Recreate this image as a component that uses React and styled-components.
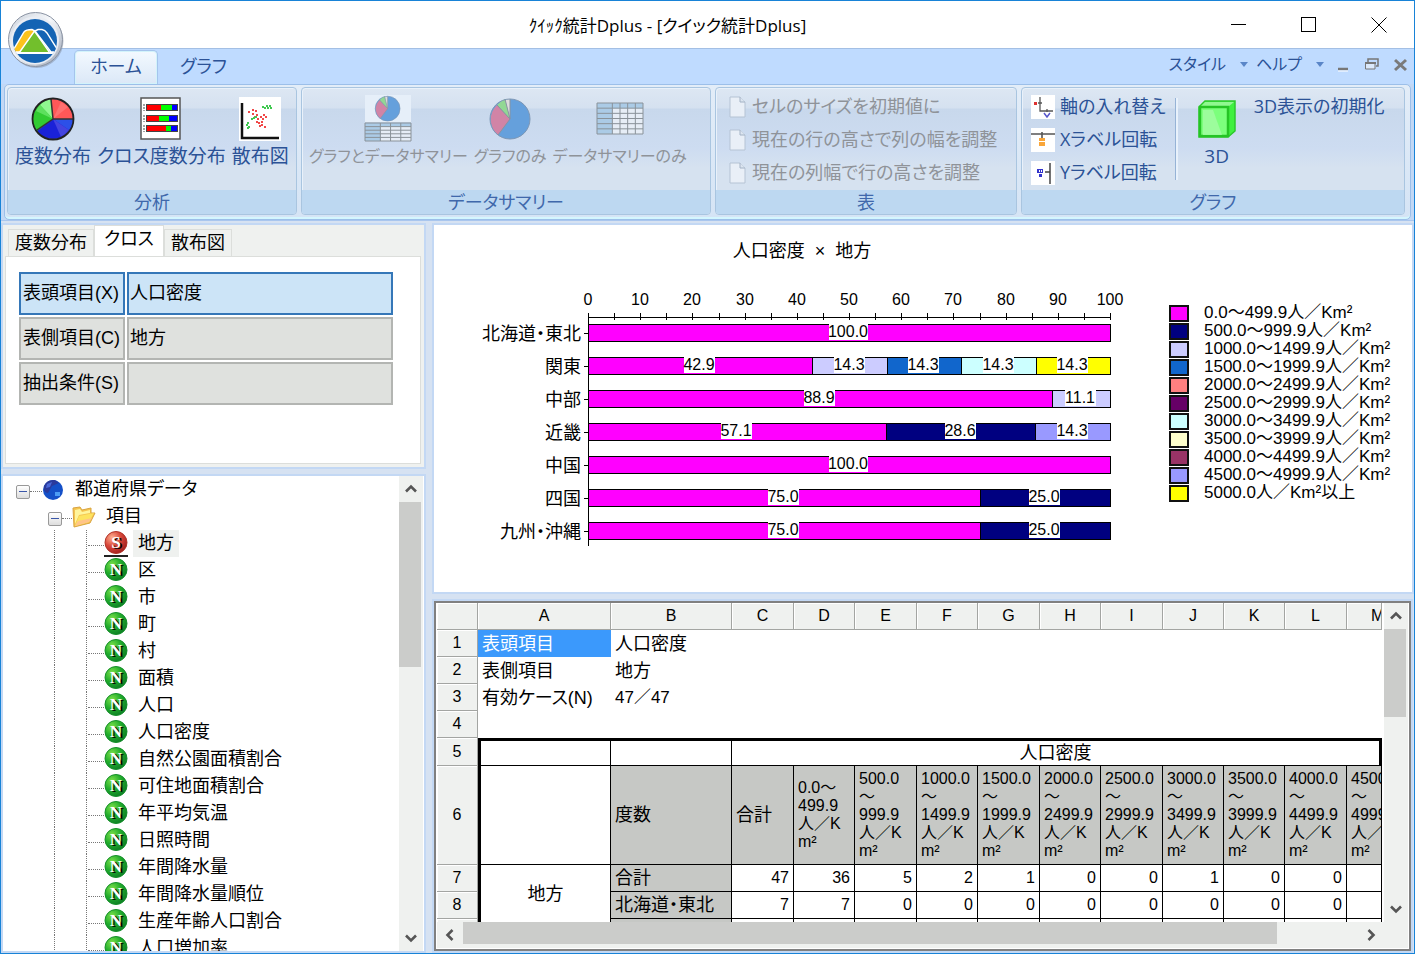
import { Fragment } from 'react'
import styled, { createGlobalStyle } from 'styled-components'

const GlobalStyle = createGlobalStyle`
  * {
    box-sizing: border-box;
  }

  body {
    margin: 0;
    font-family: 'Liberation Sans', 'Noto Sans CJK JP', sans-serif;
    font-size: 18px;
    line-height: 27px;
    color: #000;
    font-feature-settings: 'palt';
  }

  button, input {
    font: inherit;
    font-feature-settings: inherit;
    color: inherit;
    margin: 0;
  }
`

const MAGENTA = '#ff00ff'
const NAVY = '#000080'
const LAVENDER = '#ccccff'
const BLUE = '#1166cc'
const CYAN = '#ccffff'
const PERIWINKLE = '#9999ff'
const YELLOW = '#ffff00'

const legend = [
  [MAGENTA, '0.0～499.9人／Km²'],
  [NAVY, '500.0～999.9人／Km²'],
  [LAVENDER, '1000.0～1499.9人／Km²'],
  [BLUE, '1500.0～1999.9人／Km²'],
  ['#ff8080', '2000.0～2499.9人／Km²'],
  ['#660066', '2500.0～2999.9人／Km²'],
  [CYAN, '3000.0～3499.9人／Km²'],
  ['#ffffcc', '3500.0～3999.9人／Km²'],
  ['#993366', '4000.0～4499.9人／Km²'],
  [PERIWINKLE, '4500.0～4999.9人／Km²'],
  [YELLOW, '5000.0人／Km²以上']
]

const bars = [
  { name: '北海道・東北', parts: [[100, MAGENTA]] },
  { name: '関東', parts: [[42.9, MAGENTA], [14.3, LAVENDER], [14.3, BLUE], [14.3, CYAN], [14.3, YELLOW]] },
  { name: '中部', parts: [[88.9, MAGENTA], [11.1, LAVENDER]] },
  { name: '近畿', parts: [[57.1, MAGENTA], [28.6, NAVY], [14.3, PERIWINKLE]] },
  { name: '中国', parts: [[100, MAGENTA]] },
  { name: '四国', parts: [[75, MAGENTA], [25, NAVY]] },
  { name: '九州・沖縄', parts: [[75, MAGENTA], [25, NAVY]] }
]

const treeItems = [
  '地方', '区', '市', '町', '村', '面積', '人口', '人口密度', '自然公園面積割合', '可住地面積割合',
  '年平均気温', '日照時間', '年間降水量', '年間降水量順位', '生産年齢人口割合', '人口増加率'
]

const columns = [
  ['A', 133], ['B', 121], ['C', 62], ['D', 61], ['E', 62], ['F', 61], ['G', 62],
  ['H', 61], ['I', 62], ['J', 61], ['K', 61], ['L', 62], ['M', 35]
]

const ranges = [
  ['0.0～', '499.9'],
  ['500.0', '～', '999.9'],
  ['1000.0', '～', '1499.9'],
  ['1500.0', '～', '1999.9'],
  ['2000.0', '～', '2499.9'],
  ['2500.0', '～', '2999.9'],
  ['3000.0', '～', '3499.9'],
  ['3500.0', '～', '3999.9'],
  ['4000.0', '～', '4499.9'],
  ['4500.0', '～', '4999.9']
]

/* ---------- icons ---------- */

function OrbIcon () {
  return (
    <svg width='58' height='58' viewBox='0 0 58 58' aria-hidden='true'>
      <defs>
        <linearGradient id='orbRing' x1='0' y1='0' x2='1' y2='1'>
          <stop offset='0' stopColor='#c9d0da' />
          <stop offset='.45' stopColor='#f6f8fb' />
          <stop offset='1' stopColor='#98a2b3' />
        </linearGradient>
        <clipPath id='orbClip'><circle cx='28' cy='30' r='22' /></clipPath>
      </defs>
      <circle cx='29.5' cy='30' r='27' fill='#7f8ba0' opacity='.5' />
      <circle cx='28.5' cy='28.5' r='27' fill='url(#orbRing)' stroke='#8a93a3' />
      <circle cx='28' cy='29.5' r='24' fill='#e9edf4' />
      <circle cx='28' cy='30' r='22' fill='#1464b4' />
      <g clipPath='url(#orbClip)' stroke='#fff' strokeWidth='1.4'>
        <path d='M28 20 31 18.500H35Q38 19 40 22L52 41H44Z' fill='#1464b4' />
        <path d='M5 41 17 21Q19 18.500 25 18.500L28 20 14 41Z' fill='#fbc31c' />
        <path d='M12 42 27.500 20 43 42Z' fill='#72bf2c' />
        <path d='M4 42H53' strokeWidth='2.2' />
      </g>
    </svg>
  )
}

function PieIcon () {
  return (
    <svg width='44' height='44' viewBox='0 0 44 44' aria-hidden='true'>
      <circle cx='22' cy='22' r='20' fill='#1a22d8' />
      <path d='M22 22 20 2A20 20 0 0 1 42 22Z' fill='#ff5858' />
      <path d='M22 22 20 2A20 20 0 0 0 6 34Z' fill='#32cb32' />
      <path d='M22 22 20 2Q13 3 9 8Z' fill='#90f890' />
      <path d='M22 22 9 8Q7 10 5 14Z' fill='#5ee05e' />
      <path d='M22 22 42 22Q42 28 38 33Z' fill='#2c50e8' />
      <path d='M22 22 38 33Q34 38 30 40Z' fill='#4444e0' />
      <path d='M22 22 30 5 37 10Z' fill='#ff7070' />
      <path d='M22 22 20 2M22 22H42M22 22 6 33' stroke='#333' strokeWidth='1.5' />
      <circle cx='22' cy='22' r='20.5' fill='none' stroke='#222' strokeWidth='1.8' />
    </svg>
  )
}

function CrossIcon () {
  const rows = [[8, 14, 25], [19, 12, 22], [29, 19, 24]]
  return (
    <svg width='44' height='44' viewBox='0 0 44 44' aria-hidden='true'>
      <rect x='2' y='1' width='39' height='41' fill='#fff' stroke='#555' strokeWidth='1.5' />
      {rows.map(([y, a, b]) => (
        <Fragment key={y}>
          <path d={`M5 ${y - 1}v7`} stroke='#444' strokeDasharray='2 1' />
          <rect x='7' y={y - 1} width='32' height='7' fill='#444' />
          <rect x='8' y={y} width={a} height='5' fill='#f00' />
          <rect x={8 + a} y={y} width={b - a} height='5' fill='#0f0' />
          <rect x={8 + b} y={y} width={30 - b} height='5' fill='#00f' />
        </Fragment>
      ))}
    </svg>
  )
}

function ScatterIcon () {
  const red = [[10, 14], [14, 12], [17, 13], [14, 16], [18, 17], [16, 19], [19, 21], [22, 19], [25, 17], [27, 19], [24, 21], [20, 25], [23, 24], [21, 28], [26, 29], [18, 24], [23, 27]]
  const green = [[24, 9], [28, 8], [31, 8], [29, 10], [26, 10], [32, 10], [17, 19], [13, 21], [9, 25], [10, 29], [8, 27], [15, 20], [9, 30]]
  return (
    <svg width='44' height='44' viewBox='0 0 44 44' aria-hidden='true'>
      <path d='M1 0h42v44H1z' fill='#fff' />
      {red.map(([x, y]) => <rect key={`${x}-${y}`} x={x} y={y} width='2' height='2' fill='#f04848' />)}
      {green.map(([x, y]) => <rect key={`${x}-${y}`} x={x} y={y} width='2' height='2' fill='#40c850' />)}
      <path d='M4 6V41H41' fill='none' stroke='#111' strokeWidth='2.5' />
    </svg>
  )
}

function PaleSlices () {
  return (
    <>
      <circle cx='22' cy='22' r='20' fill='#65a0dc' />
      <path d='M22 22 10 38A20 20 0 0 1 9 8Z' fill='#d184a6' />
      <path d='M22 22 9 8A20 20 0 0 1 17 2Z' fill='#92d894' />
      <path d='M22 22 17 2A20 20 0 0 1 22 2Z' fill='#ddd' />
      <path d='M22 2V22L10 38M9 8 22 22 17 2' fill='none' stroke='#8a93a0' />
      <circle cx='22' cy='22' r='20' fill='none' stroke='#7d97b5' />
    </>
  )
}

function PaleGrid ({ x, y, width, height, cols, rows }) {
  const side = width / 3
  const colWidth = (width - side) / cols
  const rowHeight = height / rows
  let lines = ''
  for (let i = 0; i <= rows; i++) lines += `M${x} ${y + i * rowHeight}h${width}`
  for (let i = 0; i <= cols; i++) lines += `M${x + side + i * colWidth} ${y}v${height}`
  return (
    <>
      <rect x={x} y={y} width={width} height={height} fill='#e6edf6' />
      <path d={`M${x} ${y}h${width}v${rowHeight}H${x + side}V${y + height}H${x}z`} fill='#abcbe6' />
      <path d={`${lines}M${x} ${y}v${height}`} stroke='#8a9299' />
    </>
  )
}

function PieGridIcon () {
  return (
    <svg width='48' height='48' viewBox='0 0 48 48' aria-hidden='true'>
      <rect x='1' y='0' width='46' height='27' fill='#e6eff9' />
      <g transform='translate(10 0) scale(.62)'><PaleSlices /></g>
      <PaleGrid x={1} y={28} width={46} height={18} cols={3} rows={5} />
    </svg>
  )
}

function PalePieIcon () {
  return <svg width='44' height='44' viewBox='0 0 44 44' aria-hidden='true'><PaleSlices /></svg>
}

function GridIcon () {
  return (
    <svg width='48' height='44' viewBox='0 0 48 44' aria-hidden='true'>
      <PaleGrid x={1} y={6} width={46} height={31} cols={4} rows={6} />
    </svg>
  )
}

function PageIcon () {
  return (
    <svg width='18' height='22' viewBox='0 0 18 22' aria-hidden='true'>
      <path d='M1 1H11L16 6V21H1Z' fill='#e9eff7' stroke='#b5c3d4' />
      <path d='M11 1V6H16' fill='#dce5f0' stroke='#a3b2c5' />
    </svg>
  )
}

function SwapIcon () {
  return (
    <svg width='24' height='24' viewBox='0 0 24 24' aria-hidden='true'>
      <path d='M0 0h24v24H0z' fill='#fff' />
      <path d='M9 2V16H22M7 8h4M16 14v3' stroke='#555' strokeWidth='1.3' fill='none' />
      <path d='M3 7h3v3H3z' fill='#d33' />
      <path d='M13 18 16 22 19 18' fill='none' stroke='#55c' strokeWidth='1.5' />
    </svg>
  )
}

function XLabelIcon () {
  return (
    <svg width='24' height='24' viewBox='0 0 24 24' aria-hidden='true'>
      <path d='M0 0h24v24H0z' fill='#fff' />
      <path d='M0 6H24M11 4V10' stroke='#555' strokeWidth='1.6' />
      <path d='M8 10h6v3H8zM8 14h6v4H8z' fill='#f9a63a' />
    </svg>
  )
}

function YLabelIcon () {
  return (
    <svg width='24' height='24' viewBox='0 0 24 24' aria-hidden='true'>
      <path d='M0 0h24v24H0z' fill='#fff' />
      <path d='M19 2V23M14 11h5' stroke='#444' strokeWidth='1.5' />
      <path d='M6 8h6v4H6zM8 13h3v3H8z' fill='#33c' />
      <path d='M8 9h1v2H8zM10 9h1v2h-1z' fill='#fff' />
    </svg>
  )
}

function CubeIcon () {
  return (
    <svg width='38' height='38' viewBox='0 0 38 38' aria-hidden='true'>
      <path d='M1 7 7 1H37V31L30 37H1Z' fill='#40f040' stroke='#2cc82c' strokeWidth='1.5' />
      <path d='M2 7 7 2H36L30 7Z' fill='#90f890' />
      <rect x='2' y='7' width='28' height='29' fill='#7cff7c' stroke='#25c425' strokeWidth='2.5' />
      <path d='M5 10h10L24 35H5z' fill='#a4fca4' opacity='.8' />
    </svg>
  )
}

function GlobeIcon () {
  return (
    <svg width='22' height='22' viewBox='0 0 22 22' aria-hidden='true'>
      <circle cx='11' cy='11' r='10' fill='#1450c8' />
      <path d='M2 7Q5 0 13 1L17 4 10 7 6 14Q1 14 2 7Z' fill='#2a3a9c' />
      <path d='M5 5 10 3 8 8 4 9Z' fill='#4a68d8' />
      <rect x='13' y='13' width='5' height='4' fill='#4b9cf4' />
    </svg>
  )
}

function FolderIcon () {
  return (
    <svg width='24' height='24' viewBox='0 0 24 24' aria-hidden='true'>
      <path d='M1 3 8 2 10 5 19 3V8H23L18 18 2 22Z' fill='#f5c550' stroke='#d9a441' />
      <path d='M3 5 8 4 10 7 18 5V8L7 10 3 19Z' fill='#fff59c' />
      <path d='M7 11 22 8 17 17 3 21Z' fill='#fde35f' />
      <path d='M6 16 20 13 17 17 3 21Z' fill='#ffc489' />
    </svg>
  )
}

function VariableIcon ({ letter }) {
  const nominal = letter === 'S'
  const gradient = nominal ? 'ballRed' : 'ballGreen'
  return (
    <svg width='24' height='27' viewBox='0 0 24 27' aria-hidden='true'>
      <defs>
        <radialGradient id={gradient} cx='.32' cy='.28' r='.8'>
          <stop offset='0' stopColor={nominal ? '#ffb090' : '#7be04a'} />
          <stop offset='.5' stopColor={nominal ? '#d8473a' : '#22ad2c'} />
          <stop offset='1' stopColor={nominal ? '#9c1c1c' : '#0b7a24'} />
        </radialGradient>
      </defs>
      <circle cx='12' cy='12.5' r='11' fill={`url(#${gradient})`} stroke={nominal ? '#b13428' : '#15902a'} />
      <BallLetter x='14' y='19' fill='#000'>{letter}</BallLetter>
      <BallLetter x='12' y='18' fill='#fff'>{letter}</BallLetter>
      {nominal && <path d='M0 26h24' stroke='#222' strokeWidth='2' />}
    </svg>
  )
}

function Arrow ({ turn = 0 }) {
  return (
    <svg width='12' height='12' viewBox='0 0 12 12' aria-hidden='true'>
      <path d='M1 8.500 6 3.500 11 8.500' transform={`rotate(${turn} 6 6)`} fill='none' stroke='#555' strokeWidth='2.6' />
    </svg>
  )
}

/* ---------- chart ---------- */

const PLOT_X = 154
const PLOT_WIDTH = 522
const AXIS_Y = 92
const STEP = 33

function Chart () {
  const px = (v) => Math.round(PLOT_X + (Math.min(v, 100) / 100) * PLOT_WIDTH)
  const ticks = Array.from({ length: 21 }, (_, i) => i * 5)
  return (
    <ChartSvg width='735' height='330' role='img' aria-label='人口密度 × 地方'>
      <text x='368' y='32' textAnchor='middle'>{'人口密度\u00a0\u00a0×\u00a0\u00a0地方'}</text>
      <g shapeRendering='crispEdges'>
        <path d={`M${PLOT_X} ${AXIS_Y}H${PLOT_X + PLOT_WIDTH}`} stroke='#000' />
        {ticks.map((t) => <path key={t} d={`M${px(t)} ${AXIS_Y - 4}v7`} stroke='#000' />)}
      </g>
      {ticks.filter((t) => t % 10 === 0).map((t) => (
        <ChartNumber key={t} x={px(t)} y={AXIS_Y - 12}>{t}</ChartNumber>
      ))}
      {bars.map((bar, row) => {
        const top = AXIS_Y + 7 + row * STEP
        let sum = 0
        return (
          <g key={bar.name}>
            <text x={PLOT_X - 7} y={top + 16} textAnchor='end'>{bar.name}</text>
            <path d={`M${PLOT_X - 4} ${top + 9}h4`} stroke='#000' shapeRendering='crispEdges' />
            {bar.parts.map(([value, color], i) => {
              const from = px(sum)
              sum += value
              const width = px(sum) - from
              const mid = Math.round(from + width / 2) - 1
              const box = value === 100 ? 39 : 31
              return (
                <Fragment key={i}>
                  <rect x={from} y={top} width={width} height='17' fill={color} stroke='#000' shapeRendering='crispEdges' />
                  <rect x={mid - (box - 1) / 2} y={top - 1} width={box} height='17' fill='#fff' />
                  <ChartNumber x={mid} y={top + 13}>{value.toFixed(1)}</ChartNumber>
                </Fragment>
              )
            })}
          </g>
        )
      })}
      <path d={`M${PLOT_X} ${AXIS_Y - 4}V${AXIS_Y + 229}`} stroke='#000' shapeRendering='crispEdges' />
    </ChartSvg>
  )
}

/* ---------- sheet ---------- */

function Sheet () {
  const counts = [
    ['合計', 47, 36, 5, 2, 1, 0, 0, 1, 0, 0],
    ['北海道・東北', 7, 7, 0, 0, 0, 0, 0, 0, 0, 0]
  ]
  return (
    <SheetTable>
      <colgroup>
        <col style={{ width: 41 }} />
        {columns.map(([name, width]) => <col key={name} style={{ width }} />)}
      </colgroup>
      <thead>
        <tr>
          <HeadCell />
          {columns.map(([name]) => <HeadCell key={name} scope='col' $cut={name === 'M'}>{name}</HeadCell>)}
        </tr>
      </thead>
      <tbody>
        <tr>
          <HeadCell scope='row'>1</HeadCell>
          <Cell $selected>表頭項目</Cell>
          <Cell colSpan={12}>人口密度</Cell>
        </tr>
        <tr>
          <HeadCell scope='row'>2</HeadCell>
          <Cell>表側項目</Cell>
          <Cell colSpan={12}>地方</Cell>
        </tr>
        <tr>
          <HeadCell scope='row'>3</HeadCell>
          <Cell>有効ケース(N)</Cell>
          <Cell colSpan={12} $small>47／47</Cell>
        </tr>
        <tr>
          <HeadCell scope='row'>4</HeadCell>
          <Cell colSpan={13} />
        </tr>
        <tr>
          <HeadCell scope='row'>5</HeadCell>
          <GridCell $top $left />
          <GridCell $top />
          <GridCell $top $right $center colSpan={11}>人口密度</GridCell>
        </tr>
        <RangeRow>
          <HeadCell scope='row'>6</HeadCell>
          <GridCell $left />
          <GridCell $shade>度数</GridCell>
          <GridCell $shade>合計</GridCell>
          {ranges.map((lines) => (
            <RangeCell key={lines[0]}>
              {[...lines, '人／K', 'm²'].map((line, i) => <div key={i}>{line}</div>)}
            </RangeCell>
          ))}
        </RangeRow>
        {counts.map(([name, ...values], row) => (
          <tr key={name}>
            <HeadCell scope='row'>{row + 7}</HeadCell>
            {row === 0 && <GridCell $left $center rowSpan={3}>地方</GridCell>}
            <GridCell $shade>{name}</GridCell>
            {values.map((value, i) => <NumberCell key={i}>{value}</NumberCell>)}
            <NumberCell />
          </tr>
        ))}
        <StubRow>
          <HeadCell />
          <GridCell $shade />
          {columns.slice(2).map(([name]) => <NumberCell key={name} />)}
        </StubRow>
      </tbody>
    </SheetTable>
  )
}

/* ---------- page ---------- */

function BigTool ({ icon, label, ...rest }) {
  return (
    <BigButton type='button' {...rest}>
      <IconSlot>{icon}</IconSlot>
      {label}
    </BigButton>
  )
}

function Condition ({ id, label, value, active }) {
  return (
    <ConditionRow>
      <ConditionLabel htmlFor={id} $active={active}>{label}</ConditionLabel>
      <ConditionInput id={id} defaultValue={value} $active={active} />
    </ConditionRow>
  )
}

export default function App () {
  return (
    <Window>
      <GlobalStyle />
      <TitleBar>
        <Orb type='button' aria-label='メニュー'><OrbIcon /></Orb>
        <Title>ｸｲｯｸ統計Dplus - [クイック統計Dplus]</Title>
        <WindowButton type='button' aria-label='最小化'>
          <svg width='16' height='16' shapeRendering='crispEdges'><path d='M0 7.500H15' stroke='#000' /></svg>
        </WindowButton>
        <WindowButton type='button' aria-label='最大化'>
          <svg width='16' height='16' shapeRendering='crispEdges'><path d='M.5.5h14v14H.5z' fill='none' stroke='#000' /></svg>
        </WindowButton>
        <WindowButton type='button' aria-label='閉じる'>
          <svg width='16' height='16'><path d='M.5.5l15 15M15.500.5l-15 15' stroke='#000' /></svg>
        </WindowButton>
      </TitleBar>

      <TabStrip>
        <RibbonTab type='button' $active>ホーム</RibbonTab>
        <RibbonTab type='button'>グラフ</RibbonTab>
        <Spacer />
        <MenuButton type='button'>スタイル<Caret /></MenuButton>
        <MenuButton type='button'>ヘルプ<Caret /></MenuButton>
        <ChildControls>
          <ChildButton type='button' aria-label='最小化'>
            <svg width='14' height='14'><path d='M2 11h10' stroke='#777' strokeWidth='2.5' /><path d='M2 13h10' stroke='#fff' /></svg>
          </ChildButton>
          <ChildButton type='button' aria-label='元に戻す'>
            <svg width='16' height='14'>
              <path d='M4 4V1H14V8H12' fill='none' stroke='#777' strokeWidth='1.5' />
              <path d='M1.500 5h9.500v6H1.500z' fill='#dbe9fb' stroke='#777' /><path d='M1 5h11' stroke='#777' strokeWidth='2' />
            </svg>
          </ChildButton>
          <ChildButton type='button' aria-label='閉じる'>
            <svg width='14' height='14'><path d='M1 2 12 12M12 2 1 12' stroke='#7a7a7a' strokeWidth='3' /></svg>
          </ChildButton>
        </ChildControls>
      </TabStrip>

      <Ribbon>
        <Group $width={290}>
          <GroupBody>
            <BigTool icon={<PieIcon />} label='度数分布' />
            <BigTool icon={<CrossIcon />} label='クロス度数分布' />
            <BigTool icon={<ScatterIcon />} label='散布図' />
          </GroupBody>
          <GroupCaption>分析</GroupCaption>
        </Group>
        <Group $width={410}>
          <GroupBody>
            <BigTool icon={<PieGridIcon />} label='グラフとデータサマリー' disabled />
            <BigTool icon={<PalePieIcon />} label='グラフのみ' disabled />
            <BigTool icon={<GridIcon />} label='データサマリーのみ' disabled />
          </GroupBody>
          <GroupCaption>データサマリー</GroupCaption>
        </Group>
        <Group $width={302}>
          <ToolList $inset={13}>
            <SmallButton type='button' disabled><PageIcon />セルのサイズを初期値に</SmallButton>
            <SmallButton type='button' disabled><PageIcon />現在の行の高さで列の幅を調整</SmallButton>
            <SmallButton type='button' disabled><PageIcon />現在の列幅で行の高さを調整</SmallButton>
          </ToolList>
          <GroupCaption>表</GroupCaption>
        </Group>
        <Group>
          <GraphTools>
            <ToolList $inset={9}>
              <SmallButton type='button'><SwapIcon />軸の入れ替え</SmallButton>
              <SmallButton type='button'><XLabelIcon />Xラベル回転</SmallButton>
              <SmallButton type='button'><YLabelIcon />Yラベル回転</SmallButton>
            </ToolList>
            <Divider />
            <BigTool icon={<CubeIcon />} label='3D' />
            <ToolList $inset={0}>
              <SmallButton type='button'>3D表示の初期化</SmallButton>
            </ToolList>
          </GraphTools>
          <GroupCaption>グラフ</GroupCaption>
        </Group>
      </Ribbon>

      <Workspace>
        <LeftColumn>
          <FormPane>
            <PageTabs>
              <PageTab type='button'>度数分布</PageTab>
              <PageTab type='button' $active>クロス</PageTab>
              <PageTab type='button'>散布図</PageTab>
            </PageTabs>
            <TabPage>
              <Condition id='cond-x' label='表頭項目(X)' value='人口密度' active />
              <Condition id='cond-c' label='表側項目(C)' value='地方' />
              <Condition id='cond-s' label='抽出条件(S)' value='' />
            </TabPage>
          </FormPane>
          <TreePane>
            <Tree>
              <TreeRow>
                <Indent $width={13} />
                <Expander type='button' aria-label='折りたたむ' />
                <Dots $width={12} />
                <GlobeIcon />
                <TreeLabel $gap={6}>都道府県データ</TreeLabel>
              </TreeRow>
              <TreeRow>
                <Indent $width={45} />
                <Expander type='button' aria-label='折りたたむ' />
                <Dots $width={10} />
                <FolderIcon />
                <TreeLabel $gap={5}>項目</TreeLabel>
              </TreeRow>
              {treeItems.map((name, i) => (
                <TreeRow key={name}>
                  <Indent $width={51} />
                  <Guide $width={32} />
                  <Guide $width={2} />
                  <Dots $width={16} />
                  <VariableIcon letter={i === 0 ? 'S' : 'N'} />
                  <TreeLabel $gap={5} $selected={i === 0}>{name}</TreeLabel>
                </TreeRow>
              ))}
            </Tree>
            <ScrollColumn>
              <ScrollButton type='button' aria-label='上へ'><Arrow /></ScrollButton>
              <ScrollTrack><ThumbY $height='39%' /></ScrollTrack>
              <ScrollButton type='button' aria-label='下へ'><Arrow turn={180} /></ScrollButton>
            </ScrollColumn>
          </TreePane>
        </LeftColumn>

        <RightColumn>
          <ChartPane>
            <Chart />
            <Legend>
              {legend.map(([color, text]) => (
                <LegendItem key={text}><Swatch $color={color} />{text}</LegendItem>
              ))}
            </Legend>
          </ChartPane>
          <SheetPane>
            <SheetView><Sheet /></SheetView>
            <ScrollColumn>
              <ScrollButton type='button' aria-label='上へ'><Arrow /></ScrollButton>
              <ScrollTrack><ThumbY $height='33%' /></ScrollTrack>
              <ScrollButton type='button' aria-label='下へ'><Arrow turn={180} /></ScrollButton>
            </ScrollColumn>
            <ScrollRow>
              <ScrollButton type='button' aria-label='左へ'><Arrow turn={270} /></ScrollButton>
              <ScrollTrack><ThumbX /></ScrollTrack>
              <ScrollButton type='button' aria-label='右へ'><Arrow turn={90} /></ScrollButton>
            </ScrollRow>
          </SheetPane>
        </RightColumn>
      </Workspace>
    </Window>
  )
}

const Window = styled.div`
  display: flex;
  flex-direction: column;
  height: 100vh;
  min-height: 700px;
  overflow: hidden;
  border: 1px solid #1883d7;
  background: #c2d8f5;
`

const PlainButton = styled.button`
  display: flex;
  align-items: center;
  padding: 0;
  border: 0;
  background: none;
`

const TitleBar = styled.header`
  position: relative;
  display: flex;
  flex: none;
  height: 47px;
  padding-left: 130px;
  background: #fff;
`

const Orb = styled(PlainButton)`
  position: absolute;
  left: 6px;
  top: 10px;
  z-index: 1;
`

const Title = styled.h1`
  flex: 1;
  margin: 0;
  font-family: 'Open Sans', 'Noto Sans CJK JP', sans-serif;
  font-size: 17px;
  font-weight: normal;
  line-height: 50px;
  text-align: center;
`

const WindowButton = styled(PlainButton)`
  justify-content: center;
  width: 70px;
`

const TabStrip = styled.nav`
  display: flex;
  align-items: stretch;
  flex: none;
  height: 36px;
  padding-left: 73px;
  border-top: 1px solid #a3bfe4;
  background: #bfdbff;
  color: #2b5296;
`

const RibbonTab = styled(PlainButton)`
  justify-content: center;
  width: ${({ $active }) => $active ? '84px' : '91px'};
  margin-top: 1px;
  border: 1px solid ${({ $active }) => $active ? '#a5c4ec' : 'transparent'};
  border-bottom: 0;
  border-radius: 5px 5px 0 0;
  background: ${({ $active }) => $active ? 'linear-gradient(#f3f9ff, #dbe8f7)' : 'none'};
  box-shadow: ${({ $active }) => $active ? 'inset 0 0 0 1px #d2f3fb' : 'none'};
`

const Spacer = styled.span`
  flex: 1;
`

const MenuButton = styled(PlainButton)`
  gap: 14px;
  padding: 0 8px 4px 0;
  font-size: 16px;
`

const Caret = styled.span`
  border: 4px solid transparent;
  border-top: 5px solid #5a86c8;
  border-bottom: 0;
`

const ChildControls = styled.div`
  display: flex;
  align-items: center;
  gap: 14px;
  padding: 0 6px 3px 4px;
`

const ChildButton = styled(PlainButton)``

const Ribbon = styled.div`
  display: flex;
  flex: none;
  gap: 4px;
  height: 136px;
  margin: 0 3px;
  padding: 2px 5px 4px 2px;
  border: 1px solid #9cbfe9;
  border-radius: 5px;
  background: linear-gradient(#e3edf8, #d5e4f5);
  box-shadow: inset 0 -2px 0 #d4f6fe;
  font-family: 'Open Sans', 'Noto Sans CJK JP', sans-serif;
`

const Group = styled.section`
  display: flex;
  flex-direction: column;
  flex: ${({ $width }) => $width ? `0 1 ${$width}px` : '1'};
  min-width: 0;
  border: 1px solid #a9c5e0;
  border-radius: 4px;
  background: linear-gradient(#dde7f3 0, #d5e1f0 20px, #c8d8ec 21px, #cddcf1 60px, #d6e2f0 80px);
  box-shadow: inset 1px 1px 0 #e9f1fa;
  overflow: hidden;
`

const GroupBody = styled.div`
  display: flex;
  flex: 1;
  gap: 6px;
  padding: 0 7px;
`

const GroupCaption = styled.h2`
  margin: 0;
  font-size: 18px;
  font-weight: normal;
  line-height: 24px;
  text-align: center;
  color: #4068ab;
  background: #bdd8f1;
`

const BigButton = styled(PlainButton)`
  flex-direction: column;
  padding-top: 7px;
  font-size: ${({ disabled }) => disabled ? '16px' : '19px'};
  color: ${({ disabled }) => disabled ? '#8f9399' : '#2b5296'};
  white-space: nowrap;
`

const IconSlot = styled.span`
  display: grid;
  place-items: center;
  height: 48px;
`

const ToolList = styled.div`
  display: flex;
  flex-direction: column;
  flex: 1 0 auto;
  padding: 2px 0 0 ${({ $inset }) => $inset}px;
`

const SmallButton = styled(PlainButton)`
  gap: 5px;
  height: 33px;
  color: ${({ disabled }) => disabled ? '#8f9399' : '#2b5296'};
  white-space: nowrap;
`

const GraphTools = styled(GroupBody)`
  gap: 18px;
  padding: 0;

  & > ${ToolList} {
    flex: none;
  }
`

const Divider = styled.span`
  width: 3px;
  margin: 10px 2px 10px -9px;
  border-left: 1px solid #96b3d6;
  background: #e8f1fb;
`

const Workspace = styled.main`
  display: flex;
  flex: 1;
  min-height: 0;
  gap: 6px;
  padding: 2px 0 0;
  background: #d6e2f2;
  border-top: 1px solid #a9c6ee;
`

const LeftColumn = styled.div`
  display: flex;
  flex-direction: column;
  flex: 0 0 425px;
  gap: 5px;
`

const RightColumn = styled.div`
  display: flex;
  flex-direction: column;
  flex: 1;
  min-width: 0;
  gap: 5px;
`

const Pane = styled.section`
  border: 2px solid #c3d8f4;
  background: #fff;
`

const FormPane = styled(Pane)`
  display: flex;
  flex-direction: column;
  flex: none;
  height: 246px;
  padding: 0 3px 3px 2px;
  background: #eff1ef;
`

const PageTabs = styled.div`
  display: flex;
  align-items: flex-end;
  height: 31px;
  padding-left: 3px;
`

const PageTab = styled(PlainButton)`
  height: ${({ $active }) => $active ? '31px' : '27px'};
  padding: ${({ $active }) => $active ? '0 9px 4px' : '0 6px'};
  border: 1px solid #dcdedb;
  border-bottom: 0;
  background: ${({ $active }) => $active ? '#fff' : 'none'};
`

const TabPage = styled.div`
  display: flex;
  flex-direction: column;
  flex: 1;
  gap: 2px;
  padding: 15px 27px 0 13px;
  border: 1px solid #dcdedb;
  background: #fff;
`

const ConditionRow = styled.div`
  display: flex;
  gap: 2px;
`

const ConditionLabel = styled.label`
  flex: 0 0 106px;
  height: 43px;
  padding-left: 2px;
  border: 2px solid ${({ $active }) => $active ? '#3577b8' : '#b3b5b2'};
  background: ${({ $active }) => $active ? '#cce4f7' : '#dfe1de'};
  line-height: 39px;
`

const ConditionInput = styled.input`
  flex: 1;
  min-width: 0;
  height: 43px;
  padding: 0 1px 5px;
  border: 2px solid ${({ $active }) => $active ? '#3577b8' : '#b3b5b2'};
  border-radius: 0;
  background: ${({ $active }) => $active ? '#cce4f7' : '#dfe1de'};
`

const TreePane = styled(Pane)`
  display: flex;
  flex: 1;
  min-height: 0;
  padding-right: 1px;
`

const Tree = styled.div`
  flex: 1;
  overflow: hidden;
`

const TreeRow = styled.div`
  display: flex;
  align-items: center;
  height: 27px;
`

const Indent = styled.span`
  width: ${({ $width }) => $width}px;
`

const Guide = styled.span`
  align-self: stretch;
  width: ${({ $width }) => $width}px;
  border-left: 1px dotted #777;
`

const Dots = styled.span`
  width: ${({ $width }) => $width}px;
  margin-top: 4px;
  border-top: 1px dotted #777;
`

const Expander = styled(PlainButton)`
  justify-content: center;
  width: 14px;
  height: 14px;
  margin-top: 4px;
  border: 1px solid #999;
  border-radius: 2px;
  background: linear-gradient(#fff, #ddd);

  &::before {
    content: '';
    width: 8px;
    height: 1px;
    background: #3a56a8;
  }
`

const TreeLabel = styled.span`
  margin-left: ${({ $gap }) => $gap}px;
  padding: 0 5px;
  background: ${({ $selected }) => $selected ? '#eff1ef' : 'none'};
  white-space: nowrap;
`

const BallLetter = styled.text`
  font-family: 'Liberation Serif', serif;
  font-size: 17px;
  font-weight: bold;
  text-anchor: middle;
`

const ScrollColumn = styled.div`
  display: flex;
  flex-direction: column;
  flex: 0 0 24px;
  background: #eff1ef;
`

const ScrollButton = styled(PlainButton)`
  justify-content: center;
  flex: 0 0 26px;
`

const ScrollTrack = styled.div`
  flex: 1;
`

const ThumbY = styled.div`
  width: 22px;
  height: ${({ $height }) => $height};
  background: #cbccca;
`

const ThumbX = styled.div`
  width: 91%;
  height: 22px;
  background: #cbccca;
`

const ScrollRow = styled.div`
  display: flex;
  grid-column: 1 / -1;
  padding-right: 24px;
  background: #eff1ef;
`

const ChartPane = styled(Pane)`
  display: flex;
  flex: none;
  height: 371px;
`

const ChartSvg = styled.svg`
  flex: none;
  font-size: 18px;
`

const ChartNumber = styled.text`
  font-size: 16px;
  text-anchor: middle;
`

const Legend = styled.ul`
  margin: 79px 0 0;
  padding: 0;
  list-style: none;
  font-size: 17px;
  line-height: 18px;
  font-feature-settings: normal;
`

const LegendItem = styled.li`
  display: flex;
  align-items: center;
  gap: 15px;
  height: 18px;
  white-space: nowrap;
`

const Swatch = styled.span`
  width: 20px;
  height: 17px;
  border: 2px solid #111;
  background: ${({ $color }) => $color};
`

const SheetPane = styled(Pane)`
  display: grid;
  grid-template: minmax(0, 1fr) 26px / minmax(0, 1fr) 24px;
  flex: 1;
  min-height: 0;
  margin-right: 1px;
  border-bottom-width: 3px;
  outline: 2px solid #808080;
  outline-offset: -4px;
  padding: 2px 3px 2px 3px;
`

const SheetView = styled.div`
  overflow: hidden;
`

const SheetTable = styled.table`
  width: 945px;
  table-layout: fixed;
  border-collapse: separate;
  border-spacing: 0;
  line-height: 24px;
`

const HeadCell = styled.th`
  height: 27px;
  padding: ${({ $cut }) => $cut ? '0 0 0 24px' : '0'};
  overflow: hidden;
  border-right: 1px solid #a3a5a2;
  border-bottom: 1px solid #a3a5a2;
  background: #eff1ef;
  box-shadow: inset 1px 1px 0 #fff;
  font-size: 16px;
  font-weight: normal;
`

const Cell = styled.td`
  height: 27px;
  padding: 0 4px;
  font-size: ${({ $small }) => $small ? '17px' : '18px'};
  color: ${({ $selected }) => $selected ? '#fff' : '#000'};
  background: ${({ $selected }) => $selected ? '#3b99fc' : '#fff'};
  white-space: nowrap;
`

const GridCell = styled.td`
  height: 27px;
  padding: 0 4px;
  border: 0 solid #000;
  border-width: ${({ $top, $right, $left }) => `${$top ? 3 : 0}px ${$right ? 3 : 1}px 1px ${$left ? 3 : 0}px`};
  background: ${({ $shade }) => $shade ? '#c6c8c5' : '#fff'};
  text-align: ${({ $center }) => $center ? 'center' : 'left'};
  overflow: hidden;
  white-space: nowrap;
`

const RangeRow = styled.tr`
  height: 99px;
`

const RangeCell = styled(GridCell)`
  background: #c6c8c5;
  font-size: 16px;
  line-height: 18px;
  font-feature-settings: normal;
`

const NumberCell = styled(GridCell)`
  font-size: 16px;
  text-align: right;
`

const StubRow = styled.tr`
  & > * {
    height: 4px;
  }
`
